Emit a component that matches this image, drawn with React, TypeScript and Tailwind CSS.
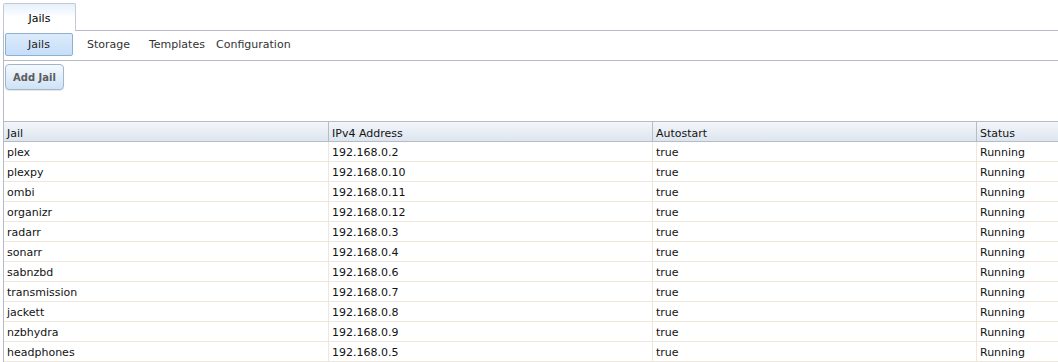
import React from "react";

const rows: [string, string][] = [
  ["plex", "192.168.0.2"],
  ["plexpy", "192.168.0.10"],
  ["ombi", "192.168.0.11"],
  ["organizr", "192.168.0.12"],
  ["radarr", "192.168.0.3"],
  ["sonarr", "192.168.0.4"],
  ["sabnzbd", "192.168.0.6"],
  ["transmission", "192.168.0.7"],
  ["jackett", "192.168.0.8"],
  ["nzbhydra", "192.168.0.9"],
  ["headphones", "192.168.0.5"],
];

export default function App() {
  return (
    <div className="w-[1058px] h-[362px] overflow-hidden bg-white font-['Verdana','DejaVu_Sans',sans-serif] text-[11px] text-[#131313]">
      <div className="pl-[3px] pt-[3px]">
        {/* top tab strip */}
        <div className="flex h-[28px]">
          <div className="w-[73px] h-[28px] border-l border-t border-r border-[#c3cad3] rounded-t-[2px] bg-gradient-to-b from-[#e6f0fb] via-white to-white flex items-center justify-center text-[#000] pt-[4px]">
            Jails
          </div>
          <div className="flex-1 border-b border-[#b5bcc7]" />
        </div>
        {/* body */}
        <div className="border-l border-[#b5bcc7] h-[331px]">
          {/* sub tabs */}
          <div className="h-[30px] border-b border-[#b5bcc7] flex items-start pt-[2px] pl-[1px] text-[#333]">
            <div className="w-[68px] h-[23px] border border-[#8fb0cf] rounded-[2px] bg-gradient-to-b from-[#dcebfb] to-[#c6defa] flex items-center justify-center text-[#222] pt-[2px]">
              Jails
            </div>
            <div className="w-[14px]" />
            <div className="w-[62px] h-[23px] flex items-center pt-[2px]">Storage</div>
            <div className="w-[67px] h-[23px] flex items-center pt-[2px]">Templates</div>
            <div className="h-[23px] flex items-center pt-[2px]">Configuration</div>
          </div>
          {/* add jail */}
          <div className="pt-[3px] pl-[1px]">
            <button className="w-[59px] h-[26px] border border-[#9fb6cf] rounded-[4px] bg-gradient-to-b from-[#f4f9fe] to-[#cfe2f6] font-bold text-[#5c5c5c] text-[10px] shadow-[0_1px_1px_rgba(0,0,0,0.1)] pt-[1px]">
              Add Jail
            </button>
          </div>
          {/* grid */}
          <div className="mt-[31px]">
            <div className="grid grid-cols-[325px_324px_324px_1fr] h-[21px] border-t border-b border-[#b5bcc7] bg-gradient-to-b from-[#f3f6fa] to-[#dde5ef] text-[#131313]">
              {["Jail", "IPv4 Address", "Autostart", "Status"].map((h, i) => (
                <div
                  key={h}
                  className={`pl-[3px] pt-[4px] flex items-center ${i < 3 ? "border-r border-[#b5bcc7]" : ""}`}
                >
                  {h}
                </div>
              ))}
            </div>
            {rows.map(([name, ip]) => (
              <div
                key={name}
                className="grid grid-cols-[325px_324px_324px_1fr] h-[20px] border-b border-[#efe7da]"
              >
                <div className="pl-[3px] pt-[3px] flex items-center border-r border-[#efe7da]">{name}</div>
                <div className="pl-[3px] pt-[3px] flex items-center border-r border-[#efe7da]">{ip}</div>
                <div className="pl-[3px] pt-[3px] flex items-center border-r border-[#efe7da]">true</div>
                <div className="pl-[3px] pt-[3px] flex items-center">Running</div>
              </div>
            ))}
          </div>
        </div>
      </div>
    </div>
  );
}
